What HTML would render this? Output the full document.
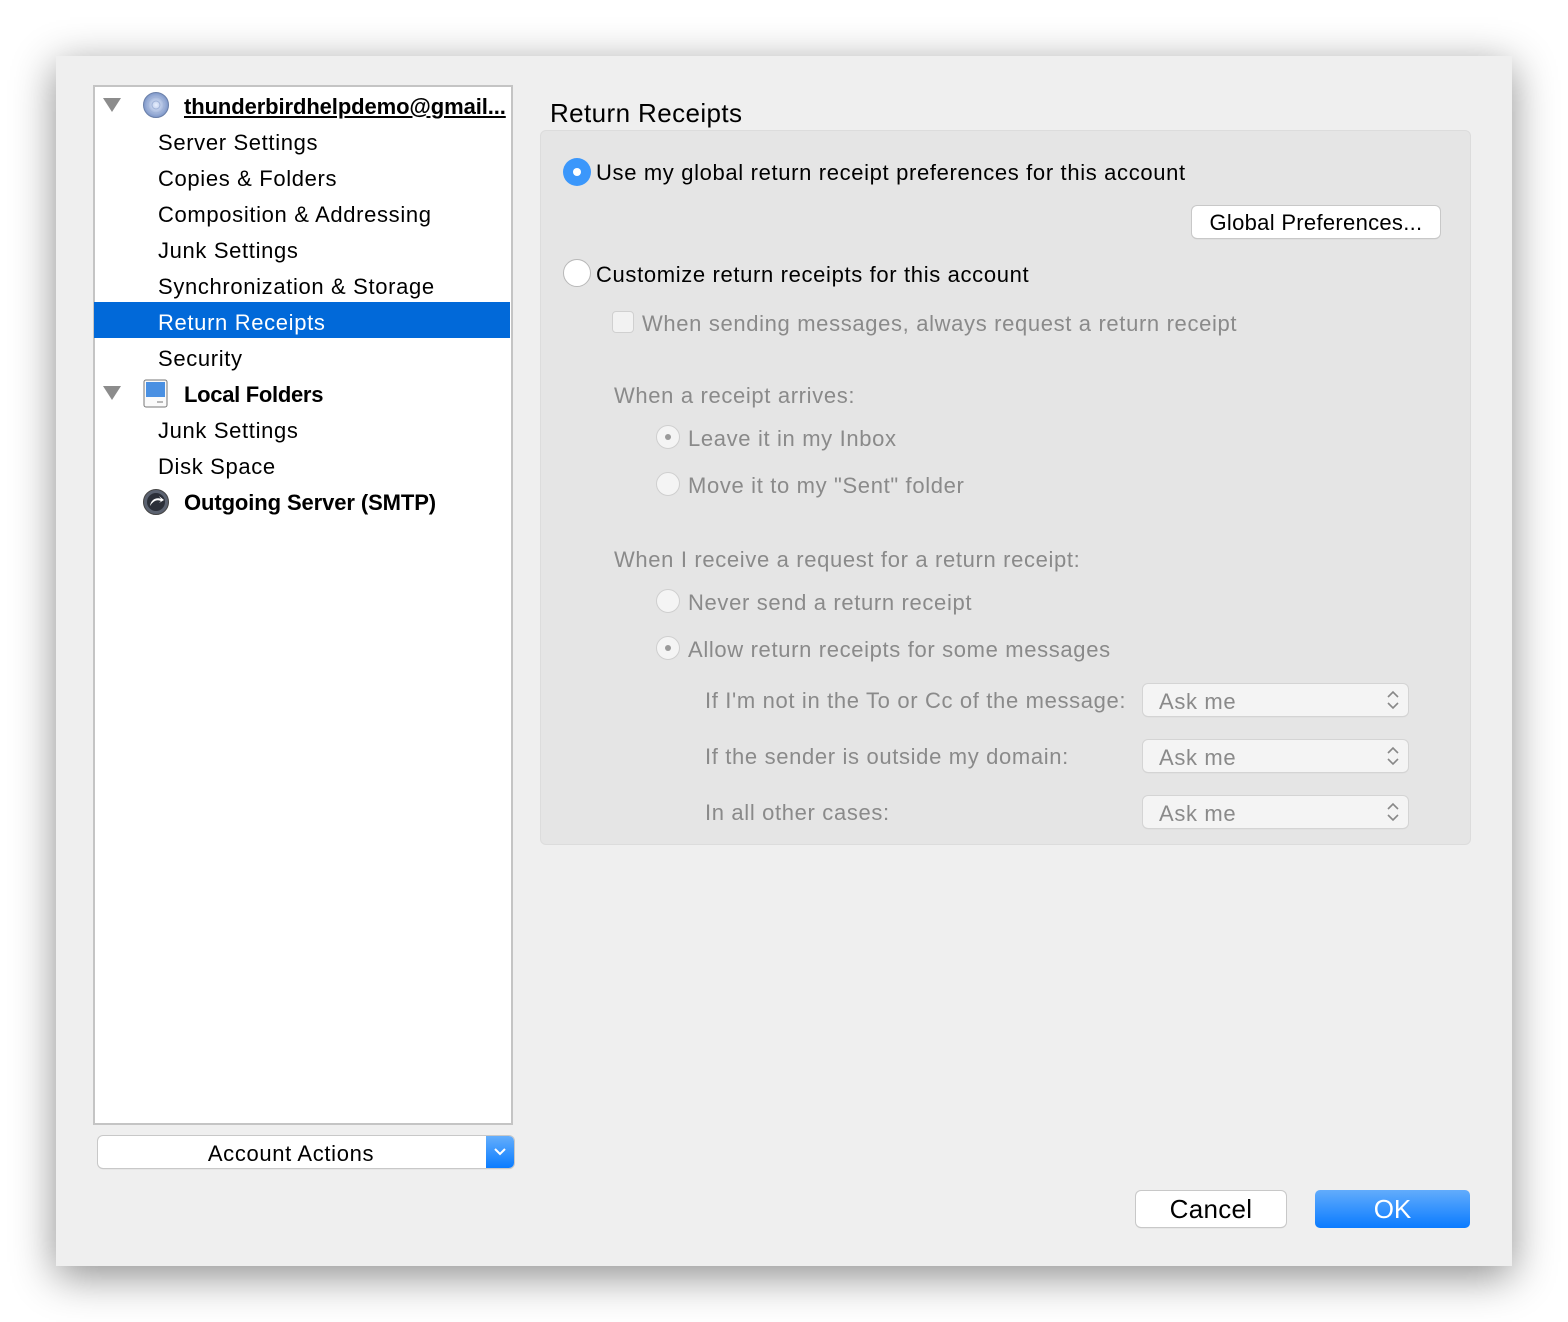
<!DOCTYPE html>
<html><head><style>
body{margin:0;width:1568px;height:1322px;background:#fff;font-family:"Liberation Sans",sans-serif;position:relative;overflow:hidden}
.win{position:absolute;left:56px;top:56px;width:1456px;height:1210px;background:#efefef;box-shadow:0 10px 40px rgba(0,0,0,.45)}
.a{position:absolute;white-space:nowrap;font-size:22px;line-height:26px;letter-spacing:0.65px}
.tree{position:absolute;left:93px;top:85px;width:416px;height:1036px;background:#fff;border:2px solid #c4c4c4}
.sel{position:absolute;left:94px;top:302px;width:416px;height:36px;background:#0169d9}
.g{color:#8a8a8a}
.rad{position:absolute;width:24px;height:24px;border-radius:50%;background:#f4f4f4;border:1px solid #cfcfcf;box-sizing:border-box}
.rad.d::after{content:"";position:absolute;left:8px;top:8px;width:6px;height:6px;border-radius:50%;background:#9a9a9a}
.selbox{position:absolute;left:1143px;width:265px;height:32px;background:#f4f4f4;border-radius:5px;box-shadow:0 0 0 1px #d4d4d4,0 1px 1px #c8c8c8}
.btn{position:absolute;background:#fff;border-radius:5px;box-shadow:0 0 0 1px #c8c8c8,0 1px 1px #b8b8b8;text-align:center}
</style></head><body>
<div class="win"></div>
<div class="tree"></div>
<div class="sel"></div>
<svg style="position:absolute;left:102px;top:97px" width="20" height="16"><path d="M1 1H19L10 15Z" fill="#8c8c8c"/></svg>
<svg style="position:absolute;left:102px;top:385px" width="20" height="16"><path d="M1 1H19L10 15Z" fill="#8c8c8c"/></svg>
<svg style="position:absolute;left:142px;top:91px" width="28" height="28"><defs><radialGradient id="r"><stop offset="0" stop-color="#e8f0ff"/><stop offset="1" stop-color="#7d96c8"/></radialGradient></defs><circle cx="14" cy="14" r="12.5" fill="url(#r)" stroke="#6a7fa8"/><circle cx="14" cy="14" r="8" fill="none" stroke="#9fb2d8"/><circle cx="14" cy="14" r="4" fill="none" stroke="#9fb2d8"/></svg>
<svg style="position:absolute;left:143px;top:379px" width="26" height="30"><rect x="1" y="1" width="23" height="27" rx="2" fill="#fafafa" stroke="#777"/><rect x="3" y="3" width="19" height="15" fill="#4a90e2"/><line x1="14" y1="23" x2="20" y2="23" stroke="#777"/></svg>
<svg style="position:absolute;left:142px;top:488px" width="28" height="28"><circle cx="14" cy="14" r="12.5" fill="#5b6270" stroke="#444"/><circle cx="14" cy="14" r="9" fill="#2b2f38"/><path d="M8 18C9 11 15 9 19 11L17 8L22 12L17 15L19 13C15 11 11 13 8 18Z" fill="#fff"/></svg>
<div class="a" style="left:184px;top:94px;font-weight:bold;text-decoration:underline;letter-spacing:-0.1px">thunderbirdhelpdemo@gmail...</div>
<div class="a" style="left:158px;top:130px">Server Settings</div>
<div class="a" style="left:158px;top:166px">Copies &amp; Folders</div>
<div class="a" style="left:158px;top:202px">Composition &amp; Addressing</div>
<div class="a" style="left:158px;top:238px">Junk Settings</div>
<div class="a" style="left:158px;top:274px">Synchronization &amp; Storage</div>
<div class="a" style="left:158px;top:310px;color:#fff">Return Receipts</div>
<div class="a" style="left:158px;top:346px">Security</div>
<div class="a" style="left:184px;top:382px;font-weight:bold;letter-spacing:-0.3px">Local Folders</div>
<div class="a" style="left:158px;top:418px">Junk Settings</div>
<div class="a" style="left:158px;top:454px">Disk Space</div>
<div class="a" style="left:184px;top:490px;font-weight:bold;letter-spacing:-0.1px">Outgoing Server (SMTP)</div>
<div class="btn" style="left:98px;top:1136px;width:416px;height:32px"></div>
<div style="position:absolute;left:486px;top:1136px;width:28px;height:32px;background:linear-gradient(#64aefc,#0a7cff);border-radius:0 5px 5px 0"></div>
<svg style="position:absolute;left:492px;top:1145px" width="16" height="14"><path d="M3 4L8 9L13 4" fill="none" stroke="#fff" stroke-width="2"/></svg>
<div class="a" style="left:98px;top:1141px;width:386px;text-align:center">Account Actions</div>

<div class="a" style="left:550px;top:99px;font-size:26px;line-height:28px;letter-spacing:0.4px">Return Receipts</div>
<div style="position:absolute;left:540px;top:130px;width:931px;height:715px;background:#e5e5e5;border:1px solid #dcdcdc;border-radius:6px;box-sizing:border-box"></div>
<div style="position:absolute;left:563px;top:158px;width:28px;height:28px;border-radius:50%;background:#3b97fb"></div>
<div style="position:absolute;left:573px;top:168px;width:8px;height:8px;border-radius:50%;background:#fff"></div>
<div class="a" style="left:596px;top:160px">Use my global return receipt preferences for this account</div>
<div class="btn" style="left:1192px;top:206px;width:248px;height:32px"><span class="a" style="position:static;line-height:34px;letter-spacing:0.3px">Global Preferences...</span></div>
<div class="rad" style="left:563px;top:259px;width:28px;height:28px;background:#fff;border-color:#b8b8b8"></div>
<div class="a" style="left:596px;top:262px">Customize return receipts for this account</div>
<div style="position:absolute;left:612px;top:311px;width:22px;height:22px;border-radius:4px;background:#f2f2f2;border:1px solid #d0d0d0;box-sizing:border-box"></div>
<div class="a g" style="left:642px;top:311px">When sending messages, always request a return receipt</div>
<div class="a g" style="left:614px;top:383px">When a receipt arrives:</div>
<div class="rad d" style="left:656px;top:425px"></div>
<div class="a g" style="left:688px;top:426px">Leave it in my Inbox</div>
<div class="rad" style="left:656px;top:472px"></div>
<div class="a g" style="left:688px;top:473px">Move it to my "Sent" folder</div>
<div class="a g" style="left:614px;top:547px">When I receive a request for a return receipt:</div>
<div class="rad" style="left:656px;top:589px"></div>
<div class="a g" style="left:688px;top:590px">Never send a return receipt</div>
<div class="rad d" style="left:656px;top:636px"></div>
<div class="a g" style="left:688px;top:637px">Allow return receipts for some messages</div>
<div class="a g" style="left:705px;top:688px">If I'm not in the To or Cc of the message:</div>
<div class="a g" style="left:705px;top:744px">If the sender is outside my domain:</div>
<div class="a g" style="left:705px;top:800px">In all other cases:</div>
<div class="selbox" style="top:684px"></div><div class="a g" style="left:1159px;top:689px">Ask me</div>
<div class="selbox" style="top:740px"></div><div class="a g" style="left:1159px;top:745px">Ask me</div>
<div class="selbox" style="top:796px"></div><div class="a g" style="left:1159px;top:801px">Ask me</div>
<svg style="position:absolute;left:1386px;top:689px" width="14" height="22"><path d="M2 8L7 3L12 8M2 14L7 19L12 14" fill="none" stroke="#888" stroke-width="1.6"/></svg>
<svg style="position:absolute;left:1386px;top:745px" width="14" height="22"><path d="M2 8L7 3L12 8M2 14L7 19L12 14" fill="none" stroke="#888" stroke-width="1.6"/></svg>
<svg style="position:absolute;left:1386px;top:801px" width="14" height="22"><path d="M2 8L7 3L12 8M2 14L7 19L12 14" fill="none" stroke="#888" stroke-width="1.6"/></svg>
<div class="btn" style="left:1136px;top:1191px;width:150px;height:36px"><span class="a" style="position:static;font-size:26px;line-height:36px;letter-spacing:0.3px">Cancel</span></div>
<div style="position:absolute;left:1315px;top:1190px;width:155px;height:38px;border-radius:5px;background:linear-gradient(#62acfc,#0a7bff);text-align:center;color:#fff;font-size:26px;line-height:38px">OK</div>
</body></html>
